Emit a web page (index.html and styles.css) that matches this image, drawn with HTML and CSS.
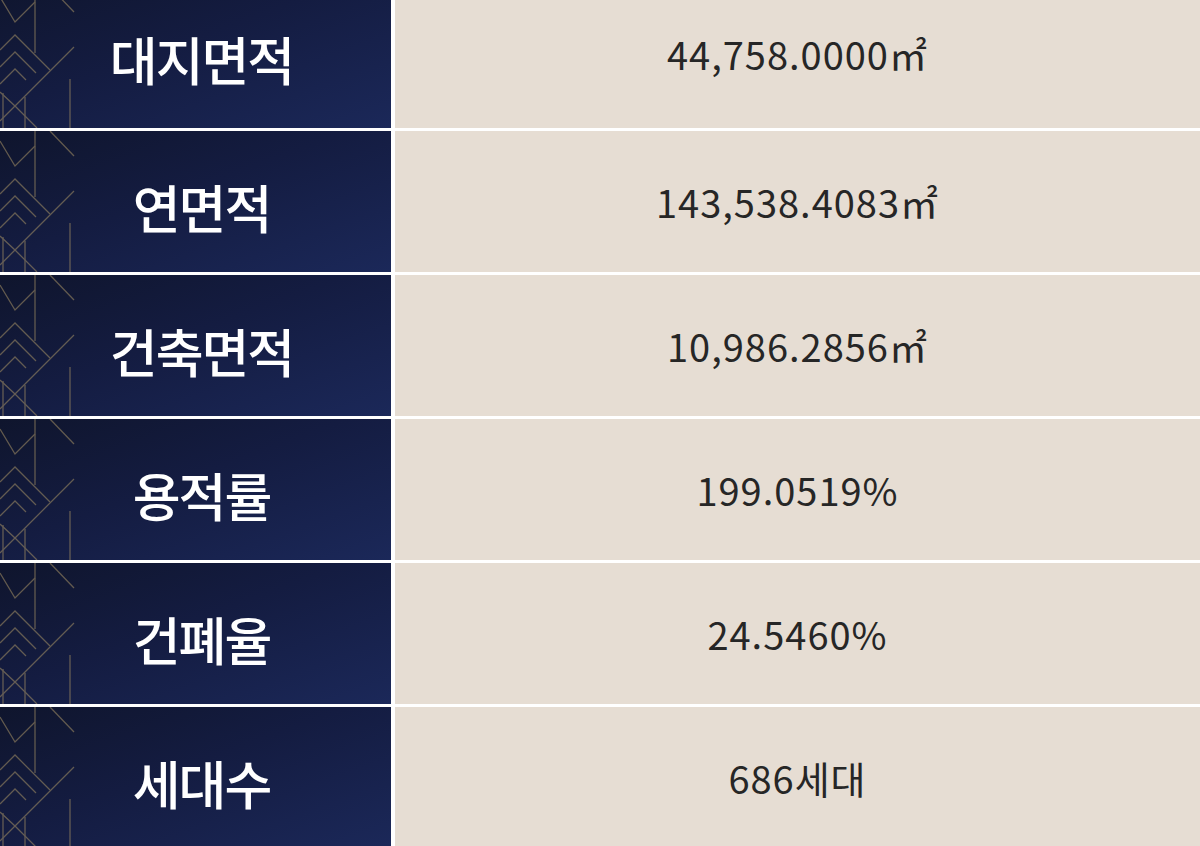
FILE: index.html
```html
<!DOCTYPE html>
<html lang="ko">
<head>
<meta charset="utf-8">
<title>사업개요</title>
<link rel="stylesheet" href="styles.css">
</head>
<body>
<div class="table">
  <div class="row first">
    <div class="label"><svg class="deco" viewBox="0 0 80 141" width="80" height="141"><g><path d="M0 10 L15 35 L35 15"/><path d="M50 0 L74 25"/><path d="M35 0 V66"/><path d="M0 63 L15 48 L50 83"/><path d="M0 80 L15 65 L36 86"/><path d="M0 97 L15 82 L26 93"/><path d="M74 60 L15 119 L0 134"/><path d="M0 105 L15 119 L37 141"/><path d="M70 92 V141"/><path d="M25 110 V141"/><path d="M3 106 V141"/></g></svg><span>대지면적</span></div>
    <div class="value">44,758.0000㎡</div>
  </div>
  <div class="row">
    <div class="label"><svg class="deco" viewBox="0 0 80 141" width="80" height="141"><g><path d="M0 10 L15 35 L35 15"/><path d="M50 0 L74 25"/><path d="M35 0 V66"/><path d="M0 63 L15 48 L50 83"/><path d="M0 80 L15 65 L36 86"/><path d="M0 97 L15 82 L26 93"/><path d="M74 60 L15 119 L0 134"/><path d="M0 105 L15 119 L37 141"/><path d="M70 92 V141"/><path d="M25 110 V141"/><path d="M3 106 V141"/></g></svg><span>연면적</span></div>
    <div class="value">143,538.4083㎡</div>
  </div>
  <div class="row">
    <div class="label"><svg class="deco" viewBox="0 0 80 141" width="80" height="141"><g><path d="M0 10 L15 35 L35 15"/><path d="M50 0 L74 25"/><path d="M35 0 V66"/><path d="M0 63 L15 48 L50 83"/><path d="M0 80 L15 65 L36 86"/><path d="M0 97 L15 82 L26 93"/><path d="M74 60 L15 119 L0 134"/><path d="M0 105 L15 119 L37 141"/><path d="M70 92 V141"/><path d="M25 110 V141"/><path d="M3 106 V141"/></g></svg><span>건축면적</span></div>
    <div class="value">10,986.2856㎡</div>
  </div>
  <div class="row">
    <div class="label"><svg class="deco" viewBox="0 0 80 141" width="80" height="141"><g><path d="M0 10 L15 35 L35 15"/><path d="M50 0 L74 25"/><path d="M35 0 V66"/><path d="M0 63 L15 48 L50 83"/><path d="M0 80 L15 65 L36 86"/><path d="M0 97 L15 82 L26 93"/><path d="M74 60 L15 119 L0 134"/><path d="M0 105 L15 119 L37 141"/><path d="M70 92 V141"/><path d="M25 110 V141"/><path d="M3 106 V141"/></g></svg><span>용적률</span></div>
    <div class="value">199.0519%</div>
  </div>
  <div class="row">
    <div class="label"><svg class="deco" viewBox="0 0 80 141" width="80" height="141"><g><path d="M0 10 L15 35 L35 15"/><path d="M50 0 L74 25"/><path d="M35 0 V66"/><path d="M0 63 L15 48 L50 83"/><path d="M0 80 L15 65 L36 86"/><path d="M0 97 L15 82 L26 93"/><path d="M74 60 L15 119 L0 134"/><path d="M0 105 L15 119 L37 141"/><path d="M70 92 V141"/><path d="M25 110 V141"/><path d="M3 106 V141"/></g></svg><span>건폐율</span></div>
    <div class="value">24.5460%</div>
  </div>
  <div class="row">
    <div class="label"><svg class="deco" viewBox="0 0 80 141" width="80" height="141"><g><path d="M0 10 L15 35 L35 15"/><path d="M50 0 L74 25"/><path d="M35 0 V66"/><path d="M0 63 L15 48 L50 83"/><path d="M0 80 L15 65 L36 86"/><path d="M0 97 L15 82 L26 93"/><path d="M74 60 L15 119 L0 134"/><path d="M0 105 L15 119 L37 141"/><path d="M70 92 V141"/><path d="M25 110 V141"/><path d="M3 106 V141"/></g></svg><span>세대수</span></div>
    <div class="value">686세대</div>
  </div>
</div>
</body>
</html>
```
FILE: styles.css
```css
html, body {
  margin: 0;
  padding: 0;
  background: #ffffff;
  overflow: hidden;
}
body {
  width: 1200px;
  height: 846px;
  font-family: "Noto Sans CJK KR", "Noto Sans", sans-serif;
}
.table {
  display: flex;
  flex-direction: column;
  gap: 3px;
  margin-top: -22px;
}
.row {
  display: grid;
  grid-template-columns: 391px 1fr;
  column-gap: 4px;
  height: 141px;
}
.row.first {
  height: 150px;
}
.label {
  position: relative;
  overflow: hidden;
  display: flex;
  align-items: center;
  justify-content: center;
  padding-left: 12px;
  padding-top: 10px;
  background: linear-gradient(160deg, #0f152d 0%, #141c41 45%, #1b2859 100%);
  color: #ffffff;
  font-weight: 500;
  font-size: 52px;
  letter-spacing: -2px;
}
.label span {
  position: relative;
}
.deco {
  position: absolute;
  left: 0;
  bottom: 0;
}
.deco g {
  fill: none;
  stroke: #9a8862;
  stroke-width: 1.3;
  opacity: 0.6;
}
.value {
  display: flex;
  align-items: center;
  justify-content: center;
  background: #e6ddd3;
  color: #262626;
  font-size: 38px;
  font-weight: 400;
  letter-spacing: 1px;
}
```
